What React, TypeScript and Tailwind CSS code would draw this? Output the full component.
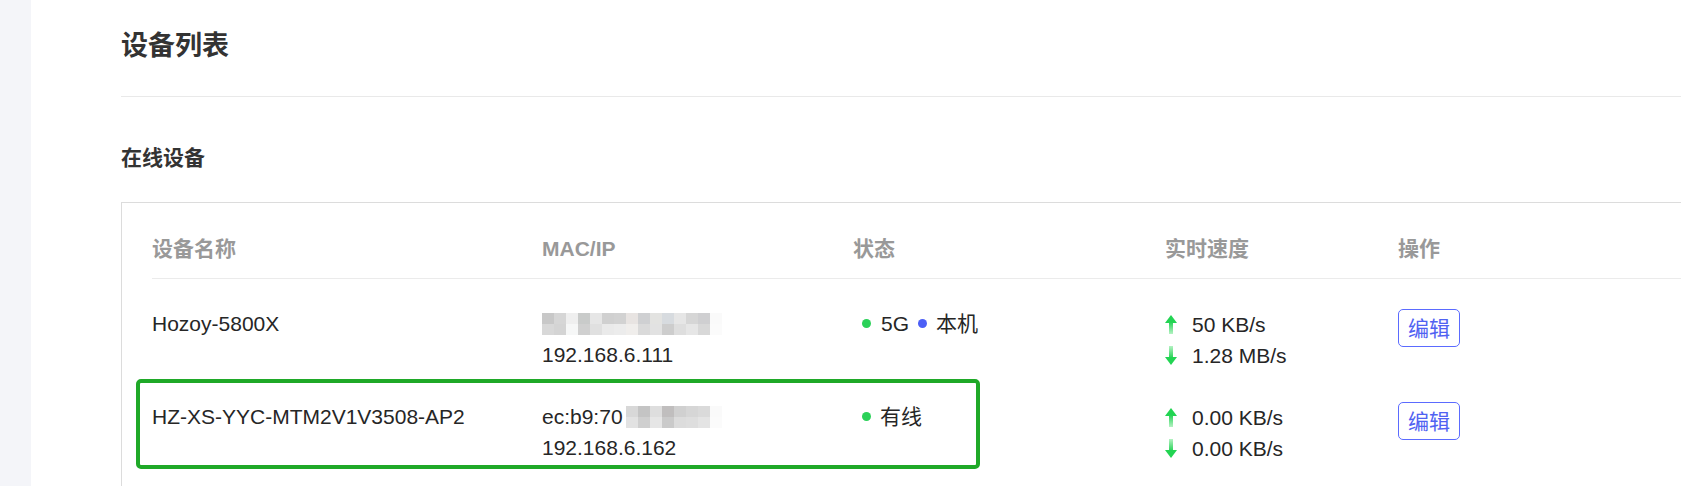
import React from "react";

const FONT = { fontFamily: '"Liberation Sans", "Noto Sans CJK SC", sans-serif' };

// pixelated mosaic over the hidden part of a MAC address
const BLUR_A = [
  ["#c8c8c8", "#d6d6d6", "#efefef", "#c9cbca", "#e6e6e6", "#d0d0d0", "#d2d2d2", "#e8e4e2", "#cfd0d2", "#e3e3e1", "#d7dbdf", "#e6e6e6", "#d6d6d6", "#cfcfd1", "#fafafa"],
  ["#d8d8d8", "#d4d4d4", "#f6f7f7", "#d0d0d0", "#e0e0e0", "#eaeaea", "#ececec", "#f0eeec", "#dadada", "#e2e2e2", "#cdcdcd", "#dedede", "#e6e6e6", "#d8d8d8", "#fbfbfb"],
];
const BLUR_B = [
  ["#d8d8d8", "#c4c4c4", "#dedede", "#c0bebe", "#d0d0d0", "#d6d6d6", "#dadada", "#fafafa"],
  ["#e2e2e2", "#cfcfcf", "#e6e6e6", "#cacaca", "#dcdcdc", "#dedede", "#e4e4e4", "#fbfbfb"],
];

function Mosaic({ cells }: { cells: string[][] }) {
  return (
    <span className="inline-flex flex-col align-middle">
      {cells.map((row, i) => (
        <span key={i} className="flex">
          {row.map((c, j) => (
            <span key={j} className="block h-[11px] w-[12px]" style={{ backgroundColor: c }} />
          ))}
        </span>
      ))}
    </span>
  );
}

function ArrowUp() {
  return (
    <svg width="12" height="19" viewBox="0 0 12 19" className="shrink-0">
      <defs>
        <linearGradient id="upStem" x1="0" y1="0" x2="0" y2="1">
          <stop offset="0" stopColor="#2bd45a" />
          <stop offset="1" stopColor="#b5f2c3" />
        </linearGradient>
      </defs>
      <polygon points="6,0 12,8 0,8" fill="#22d452" />
      <rect x="4" y="7.5" width="4" height="11.5" fill="url(#upStem)" />
    </svg>
  );
}

function ArrowDown() {
  return (
    <svg width="12" height="19" viewBox="0 0 12 19" className="shrink-0">
      <defs>
        <linearGradient id="downStem" x1="0" y1="0" x2="0" y2="1">
          <stop offset="0" stopColor="#b5f2c3" />
          <stop offset="1" stopColor="#2bd45a" />
        </linearGradient>
      </defs>
      <rect x="4" y="0" width="4" height="11.5" fill="url(#downStem)" />
      <polygon points="0,11 12,11 6,19" fill="#22d452" />
    </svg>
  );
}

function Dot({ color }: { color: string }) {
  return <span className={"inline-block h-[9px] w-[9px] rounded-full " + color} />;
}

function Speed({ up, down }: { up: string; down: string }) {
  return (
    <div className="pt-[30px]">
      <div className="flex h-[31px] items-center gap-[15px]">
        <ArrowUp />
        <span>{up}</span>
      </div>
      <div className="flex h-[31px] items-center gap-[15px]">
        <ArrowDown />
        <span>{down}</span>
      </div>
    </div>
  );
}

function EditButton() {
  return (
    <div className="pt-[30px]">
      <button
        type="button"
        className="flex h-[38px] w-[62px] items-center justify-center rounded-[5px] border border-[#5b6bff] text-[21px] leading-none text-[#5062f2]"
      >
        编辑
      </button>
    </div>
  );
}

const COLS = "grid grid-cols-[390px_311px_312px_233px_1fr]";

export default function App() {
  return (
    <div className="flex h-[486px] w-full overflow-hidden bg-white text-[#262626]" style={FONT}>
      <aside className="w-[31px] shrink-0 bg-[#f4f5f9]" />

      <main className="min-w-0 flex-1 pl-[90px]">
        <div className="h-[97px] border-b border-[#e9e9e9] pt-[32px]">
          <h1 className="text-[27px] font-bold leading-[28px] text-[#333]">设备列表</h1>
        </div>

        <h2 className="mt-[50px] text-[21px] font-bold leading-[21px] text-[#333]">在线设备</h2>

        <div className="mt-[34px] w-[1620px] border border-[#dcdcdc] pb-[40px] pl-[30px]">
          {/* header */}
          <div className={COLS + " border-b border-[#ebebeb] pb-[19px] pt-[35px] text-[21px] font-bold leading-[21px] text-[#999]"}>
            <div>设备名称</div>
            <div>MAC/IP</div>
            <div>状态</div>
            <div>实时速度</div>
            <div>操作</div>
          </div>

          {/* row 1 */}
          <div className={COLS + " h-[93px] text-[21px] leading-[31px]"}>
            <div className="pt-[29px]">Hozoy-5800X</div>
            <div className="pt-[29px]">
              <div className="flex h-[31px] items-center">
                <Mosaic cells={BLUR_A} />
              </div>
              <div>192.168.6.111</div>
            </div>
            <div className="pt-[29px]">
              <div className="flex h-[31px] items-center pl-[9px]">
                <Dot color="bg-[#2bd158]" />
                <span className="ml-[10px]">5G</span>
                <span className="ml-[9px] flex">
                  <Dot color="bg-[#4c5ff6]" />
                </span>
                <span className="ml-[9px]">本机</span>
              </div>
            </div>
            <Speed up="50 KB/s" down="1.28 MB/s" />
            <EditButton />
          </div>

          {/* row 2 */}
          <div className={COLS + " relative h-[93px] text-[21px] leading-[31px]"}>
            <div className="pt-[29px]">HZ-XS-YYC-MTM2V1V3508-AP2</div>
            <div className="pt-[29px]">
              <div className="flex h-[31px] items-center">
                <span>ec:b9:70</span>
                <span className="ml-[3px] flex">
                  <Mosaic cells={BLUR_B} />
                </span>
              </div>
              <div>192.168.6.162</div>
            </div>
            <div className="pt-[29px]">
              <div className="flex h-[31px] items-center pl-[9px]">
                <Dot color="bg-[#2bd158]" />
                <span className="ml-[9px]">有线</span>
              </div>
            </div>
            <Speed up="0.00 KB/s" down="0.00 KB/s" />
            <EditButton />

            {/* highlight annotation */}
            <div className="pointer-events-none absolute left-[-16px] top-[7px] h-[90px] w-[844px] rounded-[5px] border-[4px] border-[#1fa928]" />
          </div>
        </div>
      </main>
    </div>
  );
}
